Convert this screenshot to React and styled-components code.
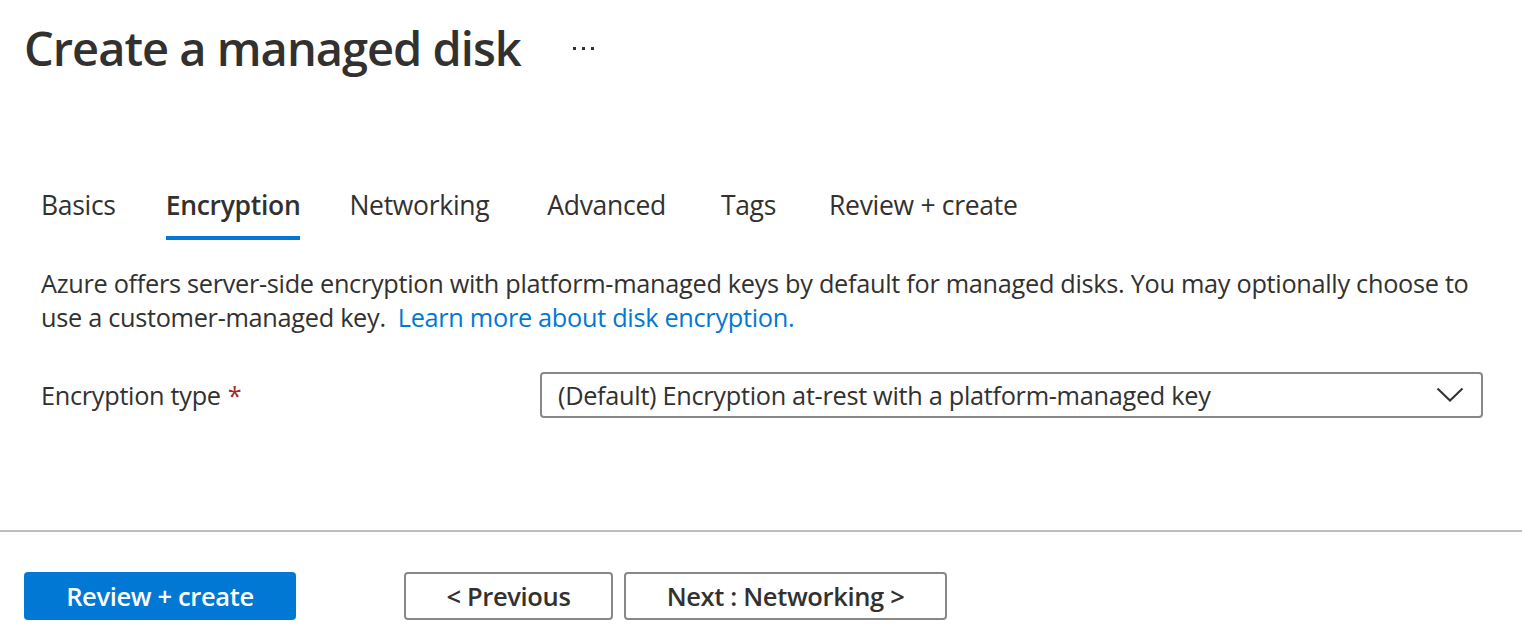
import React from "react";
import styled, { createGlobalStyle } from "styled-components";

const Global = createGlobalStyle`
  html, body { margin: 0; padding: 0; background: #ffffff; }
  body {
    font-family: "Open Sans", "Noto Sans", "Liberation Sans", sans-serif;
    color: #323130;
  }
  * { box-sizing: border-box; }
`;

const Page = styled.div`
  width: 1522px;
  height: 642px;
  overflow: hidden;
  display: flex;
  flex-direction: column;
`;

const Header = styled.header`
  display: flex;
  align-items: center;
  height: 96px;
  padding: 0 24px;
  gap: 52px;
`;

const Title = styled.h1`
  margin: 0;
  font-size: 47px;
  font-weight: 600;
  letter-spacing: -1px;
  color: #323130;
`;

const More = styled.button`
  border: 0;
  background: none;
  padding: 0;
  display: flex;
  gap: 6px;
  cursor: pointer;
`;

const Dot = styled.span`
  width: 3px;
  height: 3px;
  background: #323130;
`;

const Body = styled.main`
  padding: 86px 40px 0 41px;
`;

const Tabs = styled.nav`
  display: flex;
  height: 65px;
`;

const Tab = styled.div`
  position: relative;
  margin-right: ${(p) => p.$gap}px;
  font-size: 26.5px;
  font-weight: ${(p) => (p.$active ? 600 : 400)};
  letter-spacing: -0.3px;
  line-height: 46px;
  color: #323130;
  &::after {
    content: "";
    position: absolute;
    left: 0;
    right: 0;
    top: 54px;
    height: 4px;
    background: ${(p) => (p.$active ? "#0078d4" : "transparent")};
  }
`;

const Intro = styled.p`
  margin: 19px 0 0;
  font-size: 25.3px;
  line-height: 34px;
  letter-spacing: -0.3px;
  color: #323130;
`;

const Link = styled.a`
  color: #0078d4;
  text-decoration: none;
  margin-left: 12px;
`;

const Field = styled.div`
  display: grid;
  grid-template-columns: 499px 943px;
  align-items: center;
  margin-top: 38px;
`;

const Label = styled.label`
  font-size: 25.3px;
  letter-spacing: -0.3px;
  color: #323130;
`;

const Required = styled.span`
  color: #a4262c;
  margin-left: 7px;
`;

const Select = styled.div`
  height: 46px;
  border: 2px solid #8a8886;
  border-radius: 4px;
  display: flex;
  align-items: center;
  justify-content: space-between;
  padding: 0 17px 0 16px;
  font-size: 25.3px;
  letter-spacing: -0.3px;
  color: #323130;
`;

const Divider = styled.hr`
  margin: 112px 0 0;
  border: 0;
  height: 2px;
  background: #bdbdbd;
`;

const Footer = styled.footer`
  display: flex;
  align-items: center;
  padding: 40px 24px 0;
`;

const Button = styled.button`
  height: 48px;
  padding: 0;
  border-radius: 4px;
  font-family: inherit;
  font-size: 25.5px;
  font-weight: 600;
  letter-spacing: -0.35px;
  cursor: pointer;
  width: ${(p) => p.$w}px;
  margin-right: ${(p) => p.$gap || 0}px;
  background: ${(p) => (p.$primary ? "#0078d4" : "#ffffff")};
  color: ${(p) => (p.$primary ? "#ffffff" : "#323130")};
  border: ${(p) => (p.$primary ? "none" : "2px solid #8a8886")};
`;

const Chevron = () => (
  <svg width="28" height="16" viewBox="0 0 28 16" fill="none">
    <path d="M1.5 1.5 L14 13.5 L26.5 1.5" stroke="#323130" strokeWidth="2" />
  </svg>
);

const tabs = [
  { label: "Basics", gap: 50 },
  { label: "Encryption", gap: 49 },
  { label: "Networking", gap: 58 },
  { label: "Advanced", gap: 55 },
  { label: "Tags", gap: 53 },
  { label: "Review + create", gap: 0 },
];

export default function App() {
  return (
    <Page>
      <Global />
      <Header>
        <Title>Create a managed disk</Title>
        <More aria-label="More">
          <Dot />
          <Dot />
          <Dot />
        </More>
      </Header>
      <Body>
        <Tabs>
          {tabs.map((t) => (
            <Tab key={t.label} $gap={t.gap} $active={t.label === "Encryption"}>
              {t.label}
            </Tab>
          ))}
        </Tabs>
        <Intro>
          <span>
            Azure offers server-side encryption with platform-managed keys by default for managed disks. You may
            optionally choose to use a customer-managed key.
          </span>
          <Link href="#">Learn more about disk encryption.</Link>
        </Intro>
        <Field>
          <Label>
            Encryption type<Required>*</Required>
          </Label>
          <Select>
            <span>(Default) Encryption at-rest with a platform-managed key</span>
            <Chevron />
          </Select>
        </Field>
      </Body>
      <Divider />
      <Footer>
        <Button $primary $w={272} $gap={108}>
          Review + create
        </Button>
        <Button $w={209} $gap={11}>
          &lt; Previous
        </Button>
        <Button $w={323}>Next : Networking &gt;</Button>
      </Footer>
    </Page>
  );
}
